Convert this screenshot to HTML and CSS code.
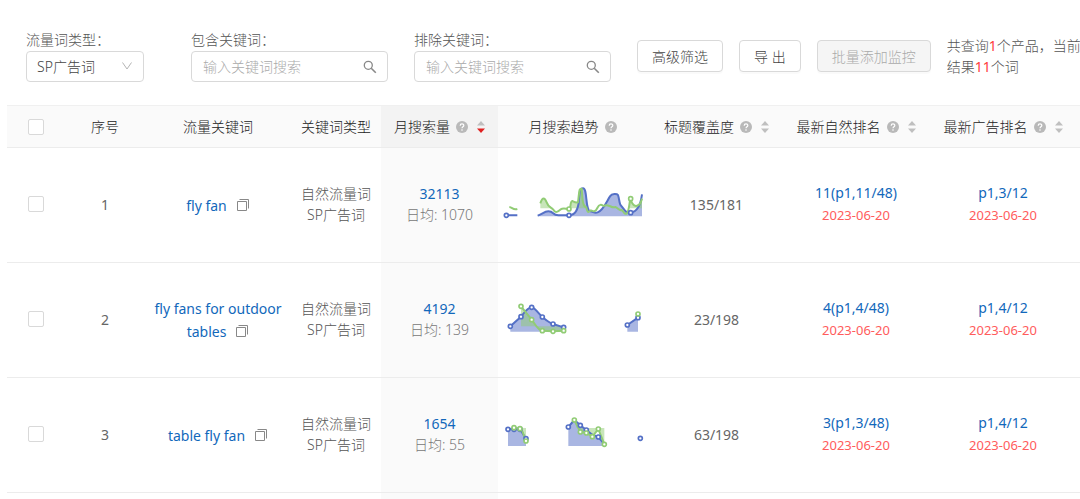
FILE: index.html
```html
<!DOCTYPE html>
<html lang="zh-CN">

<head>
    <meta charset="UTF-8">
    <meta name="viewport" content="width=device-width, initial-scale=1.0">
    <title>流量关键词</title>
    <link rel="stylesheet" href="styles.css">
</head>

<body>
    <svg class="defs" aria-hidden="true">
        <symbol id="search" viewBox="0 0 14 14">
            <circle cx="5.3" cy="5.3" r="4" fill="none" stroke="currentColor" stroke-width="1.3" />
            <path d="M8.2 8.2L12.8 12.8" stroke="currentColor" stroke-width="1.6" />
        </symbol>
        <symbol id="help" viewBox="0 0 12 12">
            <circle cx="6" cy="6" r="6" fill="#b9b9b9" />
            <path d="M4.2 4.7C4.2 2.3 7.8 2.3 7.8 4.6C7.8 5.9 6 5.8 6 7.3" fill="none" stroke="#fff" stroke-width="1.2" />
            <circle cx="6" cy="9" r=".8" fill="#fff" />
        </symbol>
        <symbol id="copy" viewBox="0 0 14 14">
            <path d="M1.5 3.5H10.5V12.5H1.5ZM3.5 1.5H12.5V10.5" fill="none" stroke="#888" />
        </symbol>
        <symbol id="sort" viewBox="0 0 8 12">
            <path class="up" d="M4 0L8 4.5H0Z" />
            <path class="down" d="M0 7.5H8L4 12Z" />
        </symbol>
    </svg>

    <form class="filters">
        <div class="field type">
            <label for="wordType">流量词类型：</label>
            <div class="control">
                <select id="wordType">
                    <option>SP广告词</option>
                </select>
                <svg class="arrow" viewBox="0 0 12 12"><path d="M1.5 2.5L6 9L10.5 2.5" fill="none" stroke="currentColor" /></svg>
            </div>
        </div>
        <div class="field include">
            <label for="include">包含关键词：</label>
            <div class="control">
                <input type="text" id="include" placeholder="输入关键词搜索">
                <svg class="search"><use href="#search" /></svg>
            </div>
        </div>
        <div class="field">
            <label for="exclude">排除关键词：</label>
            <div class="control">
                <input type="text" id="exclude" placeholder="输入关键词搜索">
                <svg class="search"><use href="#search" /></svg>
            </div>
        </div>
        <div class="buttons">
            <button type="button">高级筛选</button>
            <button type="button">导 出</button>
            <button type="button" disabled>批量添加监控</button>
        </div>
        <p class="summary">共查询<b>1</b>个产品，当前搜索<br>结果<b>11</b>个词</p>
    </form>

    <table>
        <colgroup>
            <col class="c-check">
            <col class="c-index">
            <col class="c-word">
            <col class="c-type">
            <col class="c-volume">
            <col class="c-trend">
            <col class="c-title">
            <col class="c-rank">
            <col class="c-ad">
        </colgroup>
        <thead>
            <tr>
                <th><input type="checkbox" aria-label="全选"></th>
                <th>序号</th>
                <th>流量关键词</th>
                <th>关键词类型</th>
                <th class="sorted"><span class="head">月搜索量<svg class="help"><use href="#help" /></svg><svg class="sort desc"><use href="#sort" /></svg></span></th>
                <th><span class="head">月搜索趋势<svg class="help"><use href="#help" /></svg></span></th>
                <th><span class="head">标题覆盖度<svg class="help"><use href="#help" /></svg><svg class="sort"><use href="#sort" /></svg></span></th>
                <th><span class="head">最新自然排名<svg class="help"><use href="#help" /></svg><svg class="sort"><use href="#sort" /></svg></span></th>
                <th><span class="head">最新广告排名<svg class="help"><use href="#help" /></svg><svg class="sort"><use href="#sort" /></svg></span></th>
            </tr>
        </thead>
        <tbody>
            <tr>
                <td><input type="checkbox" aria-label="选择 1"></td>
                <td class="num">1</td>
                <td class="word"><a href="#">fly fan</a><svg class="copy"><use href="#copy" /></svg></td>
                <td>自然流量词<br>SP广告词</td>
                <td class="sorted"><a href="#">32113</a><span class="daily">日均: 1070</span></td>
                <td class="trend">
                    <svg viewBox="9 7 447 135">
                        <path class="area-blue" d="M128 108C140 104 149 95 160 95C178 95 171 107 190 107H222C240 107 250 88 252 60C254 27 257 26 264 26C278 26 270 92 286 95C298 98 300 101 308 98C325 92 335 65 345 50C351 41 366 42 369 46C374 60 372 75 380 80C388 90 392 101 407 98C428 97 437 75 441 44V110H128Z" />
                        <path class="area-green" d="M136 71C143 51 149 54 155 68C160 83 168 82 175 86V86H136ZM222 88C229 86 224 65 232 64C240 68 243 70 249 68C254 25 253 27 260 27C263 72 268 80 275 86H222ZM401 86L406 56C412 80 423 82 430 76L441 57V86Z" />
                        <path class="line-blue" d="M34 107H67M128 108C140 104 149 95 160 95C178 95 171 107 190 107H222C240 107 250 88 252 60C254 27 257 26 264 26C278 26 270 92 286 95C298 98 300 101 308 98C325 92 335 65 345 50C351 41 366 42 369 46C374 60 372 75 380 80C388 90 392 101 407 98C428 97 437 75 441 44" />
                        <path class="line-green" d="M43 82C52 83 54 92 67 88M136 71C143 51 149 54 155 68C160 83 168 82 175 90C181 103 190 95 197 89C205 84 212 88 222 88C229 86 224 65 232 64C240 68 243 70 249 68C254 25 253 27 260 27C263 72 265 80 274 83C278 104 282 96 288 92C293 94 300 100 307 85C313 72 319 75 326 79C338 69 350 88 361 82C369 84 372 94 380 91C386 94 388 107 396 101C402 94 403 71 406 56C412 80 423 82 430 76C436 75 438 66 441 57" />
                        <g class="dots-blue"><circle cx="34" cy="107" r="6" /><circle cx="222" cy="107" r="6" /><circle cx="407" cy="99" r="6" /></g>
                        <g class="dots-green"><circle cx="222" cy="88" r="6" /><circle cx="407" cy="57" r="6" /></g>
                    </svg>
                </td>
                <td class="num">135/181</td>
                <td><a href="#">11(p1,11/48)</a><span class="date">2023-06-20</span></td>
                <td><a href="#">p1,3/12</a><span class="date">2023-06-20</span></td>
            </tr>
            <tr>
                <td><input type="checkbox" aria-label="选择 2"></td>
                <td class="num">2</td>
                <td class="word"><a href="#">fly fans for outdoor tables</a><svg class="copy"><use href="#copy" /></svg></td>
                <td>自然流量词<br>SP广告词</td>
                <td class="sorted"><a href="#">4192</a><span class="daily">日均: 139</span></td>
                <td class="trend">
                    <svg viewBox="9 6 447 135">
                        <path class="area-blue" d="M46 94L78 65C90 50 98 37 110 37C122 40 130 56 142 66C154 76 162 83 174 87L206 97V110H46ZM397 90L429 68V110H397Z" />
                        <path class="area-green" d="M78 34L110 74C121 88 128 106 142 107H206V94H78Z" />
                        <path class="line-blue" d="M46 94L78 65C90 50 98 37 110 37C122 40 130 56 142 66C154 76 162 83 174 87L206 97M397 90L429 68" />
                        <path class="line-green" d="M78 34L110 74C121 88 128 106 142 107L174 109L206 107" />
                        <g class="dots-blue"><circle cx="46" cy="94" r="6" /><circle cx="78" cy="65" r="6" /><circle cx="110" cy="37" r="6" /><circle cx="142" cy="66" r="6" /><circle cx="174" cy="87" r="6" /><circle cx="206" cy="97" r="6" /><circle cx="397" cy="90" r="6" /><circle cx="429" cy="68" r="6" /></g>
                        <g class="dots-green"><circle cx="78" cy="34" r="6" /><circle cx="110" cy="74" r="6" /><circle cx="142" cy="107" r="6" /><circle cx="174" cy="109" r="6" /><circle cx="206" cy="107" r="6" /><circle cx="429" cy="57" r="6" /></g>
                    </svg>
                </td>
                <td class="num">23/198</td>
                <td><a href="#">4(p1,4/48)</a><span class="date">2023-06-20</span></td>
                <td><a href="#">p1,4/12</a><span class="date">2023-06-20</span></td>
            </tr>
            <tr>
                <td><input type="checkbox" aria-label="选择 3"></td>
                <td class="num">3</td>
                <td class="word"><a href="#">table fly fan</a><svg class="copy"><use href="#copy" /></svg></td>
                <td>自然流量词<br>SP广告词</td>
                <td class="sorted"><a href="#">1654</a><span class="daily">日均: 55</span></td>
                <td class="trend">
                    <svg viewBox="9 12 447 135">
                        <path class="area-blue" d="M39 64L57 62L75 64L93 92V114H39ZM220 57L238 36L256 52L274 66L292 80L310 87L328 108V114H220Z" />
                        <path class="area-green" d="M57 59L75 62L93 99V60ZM238 36L256 72L274 75L292 86L310 63L328 109V60H245Z" />
                        <path class="line-blue" d="M39 64L57 62L75 64L93 92M220 57L238 36L256 52L274 66L292 80L310 87L328 108" />
                        <path class="line-green" d="M57 59L75 62C85 64 86 88 93 99M238 36L256 72L274 75L292 86L310 63L328 109" />
                        <g class="dots-blue"><circle cx="39" cy="64" r="6" /><circle cx="57" cy="64" r="6" /><circle cx="75" cy="64" r="6" /><circle cx="93" cy="92" r="6" /><circle cx="220" cy="57" r="6" /><circle cx="256" cy="52" r="6" /><circle cx="274" cy="66" r="6" /><circle cx="310" cy="87" r="6" /><circle cx="436" cy="91" r="6" /></g>
                        <g class="dots-green"><circle cx="57" cy="59" r="6" /><circle cx="75" cy="62" r="6" /><circle cx="93" cy="99" r="6" /><circle cx="238" cy="36" r="6" /><circle cx="256" cy="72" r="6" /><circle cx="274" cy="75" r="6" /><circle cx="292" cy="86" r="6" /><circle cx="310" cy="63" r="6" /><circle cx="328" cy="109" r="6" /></g>
                    </svg>
                </td>
                <td class="num">63/198</td>
                <td><a href="#">3(p1,3/48)</a><span class="date">2023-06-20</span></td>
                <td><a href="#">p1,4/12</a><span class="date">2023-06-20</span></td>
            </tr>
        </tbody>
        <tfoot>
            <tr>
                <td colspan="4"></td>
                <td class="sorted"></td>
                <td colspan="4"></td>
            </tr>
        </tfoot>
    </table>
</body>

</html>
```
FILE: styles.css
```css
* {
    box-sizing: border-box;
}

body {
    margin: 0;
    padding: 29px 0 0 7px;
    overflow: hidden;
    background-color: #fff;
    color: #555;
    font-family: "Noto Sans", "Noto Sans CJK SC", sans-serif;
    font-size: 14px;
    font-weight: 300;
    line-height: 21px;
}

.defs {
    display: none;
}

a {
    color: #1268bb;
    font-weight: 400;
    text-decoration: none;
}

/* filters */
.filters {
    display: flex;
    align-items: flex-start;
    padding-left: 19px;
    margin-bottom: 23px;
}

.field {
    flex: 0 0 197px;
    margin-right: 26px;
}

.field.type {
    flex-basis: 118px;
    margin-right: 47px;
}

.field label {
    display: block;
    line-height: 22px;
}

.control {
    position: relative;
}

.control input,
.control select {
    display: block;
    width: 100%;
    height: 31px;
    padding: 0 11px;
    border: 1px solid #d9d9d9;
    border-radius: 4px;
    outline: none;
    appearance: none;
    background-color: #fff;
    color: #444;
    font: inherit;
}

.control select {
    padding-left: 10px;
}

.control input::placeholder {
    color: #aaa;
}

.control svg {
    position: absolute;
    top: 9px;
    right: 11px;
    width: 14px;
    height: 14px;
    color: #888;
    pointer-events: none;
}

.control .arrow {
    width: 12px;
    height: 12px;
    color: #b5b5b5;
}

.buttons {
    display: flex;
    gap: 16px;
    margin: 11px 16px 0 0;
}

button {
    height: 32px;
    padding: 0 14px;
    border: 1px solid #d9d9d9;
    border-radius: 4px;
    background-color: #fff;
    box-shadow: 0 2px 0 rgba(0, 0, 0, 0.02);
    color: #444;
    font: inherit;
    white-space: nowrap;
    cursor: pointer;
}

button:disabled {
    background-color: #f5f5f5;
    color: #aaa;
    cursor: not-allowed;
}

.summary {
    flex: 1 1 0;
    min-width: 0;
    margin: 6px 0 0;
    overflow: hidden;
    white-space: nowrap;
}

.summary b {
    color: #ff3b3b;
    font-weight: 400;
}

/* table */
table {
    width: 100%;
    border-top: 1px solid #f0f0f0;
    border-spacing: 0;
    table-layout: fixed;
    text-align: center;
}

.c-check { width: 58px; }
.c-index { width: 80px; }
.c-word { width: 146px; }
.c-type { width: 90px; }
.c-volume { width: 117px; }
.c-trend { width: 149px; }
.c-title { width: 139px; }
.c-rank { width: 140px; }
.c-ad { width: 154px; }

th,
td {
    padding: 0;
    border-bottom: 1px solid #ececec;
}

th {
    height: 42px;
    background-color: #fafafa;
    color: #222;
    font-weight: 300;
}

th.sorted {
    background-color: #f3f3f3;
}

tbody td {
    height: 115px;
    padding-bottom: 2px;
}

td.sorted {
    background-color: #fafafa;
}

tfoot td {
    height: 8px;
    border-bottom: 0;
}

.num {
    color: #666;
    font-weight: 400;
}

input[type="checkbox"] {
    display: block;
    width: 16px;
    height: 16px;
    margin: 0 auto;
    border: 1px solid #d9d9d9;
    border-radius: 2px;
    appearance: none;
    background-color: #fff;
}

.head {
    display: flex;
    align-items: center;
    justify-content: center;
}

.help {
    width: 12px;
    height: 12px;
    margin-left: 6px;
}

.sort {
    width: 8px;
    height: 12px;
    margin-left: 9px;
    fill: #bfbfbf;
}

.sort.desc {
    --down: #e02020;
}

.down {
    fill: var(--down, #bfbfbf);
}

.word {
    padding: 0 6px;
    line-height: 23px;
}

.copy {
    width: 14px;
    height: 14px;
    margin-left: 9px;
    vertical-align: -1px;
}

.daily,
.date {
    display: block;
}

.daily {
    color: #777;
}

.date {
    color: #ff5c5c;
    font-size: 13px;
    font-weight: 400;
    line-height: 24px;
}

/* trend charts */
.trend svg {
    display: block;
    width: 100%;
}

.area-blue {
    fill: #a9b6e2;
}

.area-green {
    fill: #91cc75;
    fill-opacity: 0.5;
}

.line-blue,
.line-green {
    fill: none;
    stroke: #5470c6;
    stroke-width: 6;
    stroke-linejoin: round;
}

.line-green {
    stroke: #91cc75;
}

.dots-blue,
.dots-green {
    fill: #fff;
    stroke: #5470c6;
    stroke-width: 5;
}

.dots-green {
    stroke: #91cc75;
}
```
